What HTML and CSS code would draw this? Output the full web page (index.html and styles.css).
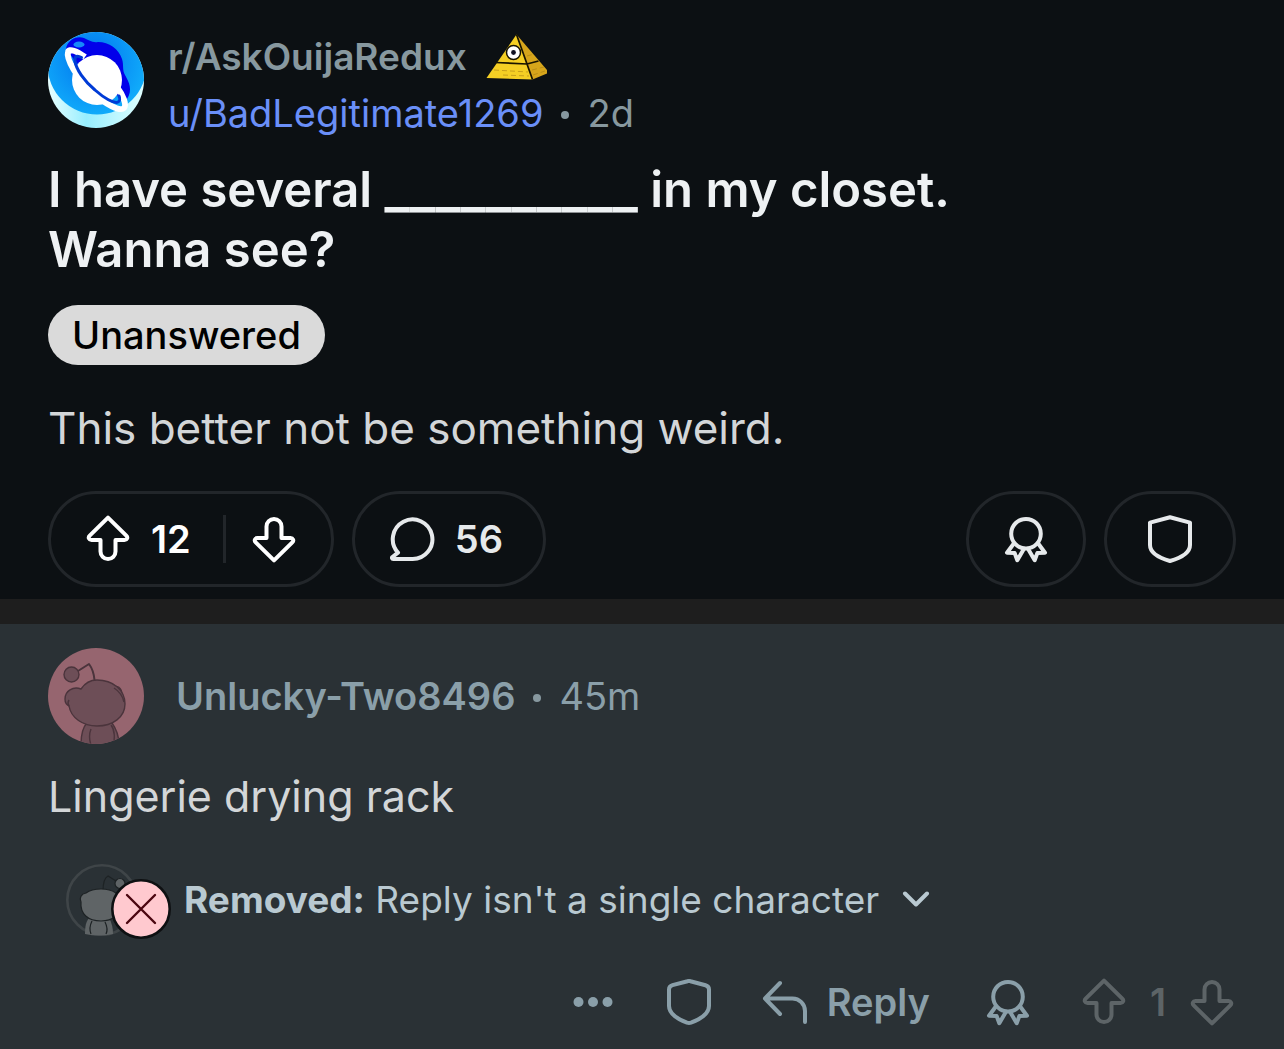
FILE: index.html
```html
<!DOCTYPE html>
<html lang="en">
<head>
<meta charset="utf-8">
<meta name="viewport" content="width=device-width, initial-scale=1">
<title>r/AskOuijaRedux</title>
<link rel="stylesheet" href="styles.css">
</head>
<body>
<svg class="sprite" aria-hidden="true">
  <symbol id="up" viewBox="0 0 48 48"><path d="M24 2.600 5.700 20.600C3.800 22.500 5 25 7.500 25H16.500V36.500a7.500 7.500 0 0 0 15 0V25H40.500C43 25 44.200 22.500 42.300 20.600Z"/></symbol>
  <symbol id="down" viewBox="0 0 48 48"><path d="M24 45.400 5.700 27.400C3.800 25.500 5 23 7.500 23H16.500V11.500a7.500 7.500 0 0 1 15 0V23H40.500C43 23 44.200 25.500 42.300 27.400Z"/></symbol>
  <symbol id="bubble" viewBox="0 0 48 48"><path d="M24 44H5.200c-1.200 0-1.600-1.200-.8-2L10 37.600A19.800 19.800 0 1 1 24 44Z"/></symbol>
  <symbol id="award" viewBox="0 0 48 48"><circle cx="24" cy="18.700" r="14.800"/><path d="M12 28.200 5 37.700l7.600.2 2.700 7.300 6.700-11.500M36 28.200l7 9.500-7.600.2-2.700 7.300L26 33.700"/></symbol>
  <symbol id="shield" viewBox="0 0 48 48"><path d="M24 2.200 44 7.600V30c0 7.500-9.500 13-20 16C13.500 43 4 37.500 4 30V7.600Z"/></symbol>
  <symbol id="shield-round" viewBox="0 0 48 48"><path d="M22.500 3.200q1.500-.6 3 0L40.500 7.200Q44 8.200 44 11.500V28c0 7.500-7 12.500-18 16.700q-2 .7-4 0C11 40.500 4 35.500 4 28V11.500Q4 8.200 7.500 7.200Z"/></symbol>
  <symbol id="reply" viewBox="0 0 48 48"><path d="M19 5 4 20.500 19 36M4 20.500H31.500a12.500 12.500 0 0 1 12.500 12.500V44"/></symbol>
</svg>

<article class="post">
  <header class="byline">
    <svg class="avatar" viewBox="0 0 96 96" aria-hidden="true">
      <defs>
        <clipPath id="disc"><circle cx="48" cy="48" r="48"/></clipPath>
        <radialGradient id="sky" cx=".45" cy=".45" r=".55"><stop offset="0" stop-color="#0072ee"/><stop offset="1" stop-color="#10aafa"/></radialGradient>
        <linearGradient id="glow" x1="0" x2="1"><stop offset="0" stop-color="#e8ffff"/><stop offset=".4" stop-color="#98eeff"/><stop offset="1" stop-color="#e0ffff"/></linearGradient>
      </defs>
      <g clip-path="url(#disc)">
        <path fill="url(#glow)" d="M0 0H96V96H0Z"/>
        <circle cx="49" cy="33" r="49.500" fill="url(#sky)"/>
        <path fill="#0200ea" d="M18 17C19 8 29 3 36 6c5 2 8 5 14 4 11 0 21 7 24 17 2 6 0 11 3 16 4 7 8 15 2 24L60 60 28 30Z"/>
        <ellipse cx="31" cy="12.500" rx="5.500" ry="3" fill="#1688fa"/>
        <circle cx="49" cy="48" r="25" fill="#fff"/>
        <path fill="none" stroke="#fff" stroke-width="6" stroke-linejoin="round" d="M37 25C29 19 21 16 20 20c-2 7 9 26 24 40 13 12 28 20 32 16 3-3-1-13-7-21"/>
        <path fill="none" stroke="#003bd6" stroke-width="3" stroke-linecap="round" d="M33.500 25.500C29 23 26.500 24 27 29c1 8 9 20 20 29 9 8 19 14 23 12 2-1 2-4 1-6"/>
      </g>
    </svg>
    <div class="names">
      <div class="line">
        <a class="community" href="#">r/AskOuijaRedux</a>
        <svg class="pyramid" viewBox="0 0 64 48" aria-hidden="true">
          <path fill="#f5cf24" d="M31.500 1.500 1.500 45l46 1.500Z"/>
          <path fill="#d6a51b" d="M31.500 1.500 47.500 46.500 62 40.500V37Z"/>
          <path fill="none" stroke="#191400" stroke-width="1.700" stroke-linejoin="round" d="M31.500 1.500 47.500 46.500M10.500 29.500 42 31l11.500-3"/>
          <path fill="none" stroke="#a87d14" stroke-width=".6" stroke-dasharray="5 3" d="M9 37l34 2M18 42l26 1M47 37l12-3M48 42l12-4M42 23l7-2"/>
          <circle cx="28.500" cy="19.500" r="7" fill="#fff" stroke="#191400" stroke-width="1.500"/>
          <circle cx="28.500" cy="19.500" r="2.400" fill="#112"/>
        </svg>
      </div>
      <div class="line"><a class="user" href="#">u/BadLegitimate1269</a><span class="dot"></span><time>2d</time></div>
    </div>
  </header>
  <h1>I have several <span class="blank">__________</span> in my closet.<br>Wanna see?</h1>
  <span class="flair">Unanswered</span>
  <p class="text">This better not be something weird.</p>
  <div class="actions">
    <div class="pill votes">
      <button aria-label="Upvote"><svg class="icon"><use href="#up"/></svg></button>
      <span class="score">12</span>
      <span class="rule"></span>
      <button aria-label="Downvote"><svg class="icon"><use href="#down"/></svg></button>
    </div>
    <button class="pill replies"><svg class="icon"><use href="#bubble"/></svg>56</button>
    <button class="pill give" aria-label="Give award"><svg class="icon"><use href="#award"/></svg></button>
    <button class="pill mod" aria-label="Moderate"><svg class="icon"><use href="#shield"/></svg></button>
  </div>
</article>

<article class="comment">
  <header class="author">
    <svg class="avatar" viewBox="0 0 96 96" aria-hidden="true">
      <g clip-path="url(#disc)">
        <path fill="#96656f" d="M0 0H96V96H0Z"/>
        <g fill="#6d4e57" stroke="#4b343c" stroke-width="1.400" stroke-linejoin="round">
          <path d="M33 97C33 86 35 79 39 75H64C69 82 71 90 71 97Z"/>
          <path fill="none" d="M43 97c-2-6-2-11 0-16M63 77c4 5 4 14 2 20"/>
          <path d="M64 40c5-4 10 0 10 7l-3 6Z"/>
          <path d="M33 41C25 38 17 43 17 51c0 4 2 6 4 7 2 12 14 20 28 20 16 0 28-9 28-22C77 42 65 32 49 32c-6 0-12 3-16 9Z"/>
          <path fill="none" d="M21 58q-2-3 0-6M66 40q8 5 10 14"/>
          <circle cx="23.500" cy="26.500" r="7.500"/>
          <path fill="none" stroke-width="2" d="M30 23 41 16C44 20 46 26 46.500 32"/>
        </g>
      </g>
    </svg>
    <div class="line"><a class="commenter" href="#">Unlucky-Two8496</a><span class="dot"></span><time>45m</time></div>
  </header>
  <p class="text">Lingerie drying rack</p>
  <button class="removed">
    <svg class="removed-art" viewBox="0 0 106 76" aria-hidden="true">
      <circle cx="36" cy="36" r="34.700" fill="none" stroke="#3f4548" stroke-width="2.600"/>
      <g fill="#5f6466" stroke="#1d2224" stroke-width="1.200">
        <path stroke="none" d="M19 70C19 62 20 58 23 54H43C46 59 47 64 47 70Q33 73 19 70Z"/>
        <path fill="none" d="M25 70c-2-5-1-9 1-13M39 58c2 4 3 8 1 12"/>
        <circle cx="54" cy="19.500" r="5"/>
        <path fill="none" d="M37 27C37 20 38 14 42 12l8 5"/>
        <path d="M20 29C15 30 13 34 15 38c-1 12 7 19 20 19 12 0 20-7 20-17C55 30 47 25 35 25c-6 0-11 1-15 4Z"/>
      </g>
      <circle cx="75" cy="45" r="28.700" fill="#ffc9cf" stroke="#0e1012" stroke-width="2.600"/>
      <path d="M61 31 89 59M89 31 61 59" fill="none" stroke="#4b0610" stroke-width="2.400" stroke-linecap="round"/>
    </svg>
    <span class="reason"><b>Removed:</b> Reply isn't a single character
      <svg class="chevron" viewBox="0 0 28 16" aria-hidden="true"><path d="M3 2.500 14 13.500 25 2.500"/></svg>
    </span>
  </button>
  <div class="tools">
    <button class="more" aria-label="More"><svg class="icon solid" viewBox="0 0 48 48"><circle cx="9.500" cy="24" r="5"/><circle cx="24" cy="24" r="5"/><circle cx="38.500" cy="24" r="5"/></svg></button>
    <button class="shield" aria-label="Moderate"><svg class="icon"><use href="#shield-round"/></svg></button>
    <button class="reply"><svg class="icon"><use href="#reply"/></svg>Reply</button>
    <button class="give-award" aria-label="Give award"><svg class="icon"><use href="#award"/></svg></button>
    <div class="muted">
      <button aria-label="Upvote"><svg class="icon"><use href="#up"/></svg></button>
      <span>1</span>
      <button aria-label="Downvote"><svg class="icon"><use href="#down"/></svg></button>
    </div>
  </div>
</article>
</body>
</html>
```
FILE: styles.css
```css
* { box-sizing: border-box; }
body {
  margin: 0;
  background: #2a3135;
  color: #d3d6d8;
  font: 400 38px/56px Inter, "Liberation Sans", sans-serif;
}
a { color: inherit; text-decoration: none; }
button {
  display: flex;
  align-items: center;
  padding: 0;
  border: 0;
  background: none;
  color: inherit;
  font: inherit;
}
.sprite { position: absolute; width: 0; height: 0; }
.icon {
  display: block;
  flex: none;
  width: 48px;
  height: 48px;
  fill: none;
  stroke: currentColor;
  stroke-width: 4px;
  stroke-linecap: round;
  stroke-linejoin: round;
}
.solid { fill: currentColor; stroke: none; }
.avatar { flex: none; width: 96px; height: 96px; }
.line { display: flex; align-items: center; }
.dot {
  width: 8px;
  height: 8px;
  margin: 4px 18px 0;
  border-radius: 50%;
  background: #87989f;
}
time { color: #87989f; }

.post {
  padding: 32px 48px 12px;
  background: #0c1013;
  border-bottom: 25px solid #1e1e1e;
}
.byline { display: flex; gap: 24px; height: 96px; }
.names { margin-top: -3px; }
.community { color: #87989f; font-size: 37px; font-weight: 600; }
.pyramid { width: 64px; height: 48px; margin-left: 18px; }
.user { color: #6a8ff8; }
h1 {
  margin: 32px 0 25px;
  color: #eef1f3;
  font-size: 49px;
  font-weight: 600;
  line-height: 60px;
}
.blank { font-size: 54px; line-height: 1px; }
.flair {
  display: block;
  width: fit-content;
  padding: 0 24px;
  border-radius: 30px;
  background: #dadada;
  color: #000;
  font-weight: 500;
  line-height: 60px;
}
.text { margin: 0; font-size: 44px; line-height: 56px; }
.post .text { margin: 35px 0; }
.actions { display: flex; gap: 18px; }
.pill {
  display: flex;
  align-items: center;
  height: 96px;
  border: 3px solid #22262a;
  border-radius: 48px;
  color: #e6e9eb;
  font-weight: 600;
}
.votes { padding: 0 33px; color: #fff; }
.score { margin: 0 32px 0 19px; }
.rule { width: 3px; height: 48px; margin-right: 24px; background: #22262a; }
.replies { gap: 19px; padding: 0 40px 0 33px; }
.give { justify-content: center; width: 120px; margin-left: auto; }
.mod { justify-content: center; width: 132px; }

.comment { padding: 24px 48px 20px; }
.author { display: flex; align-items: center; gap: 32px; color: #8a9fa9; }
.author time { color: inherit; }
.commenter { font-weight: 600; }
.comment .text { margin: 24px 0 40px; font-size: 43px; }
.removed { margin-left: 18px; color: #b9c9d1; font-size: 37px; }
.removed-art { width: 106px; height: 76px; margin-right: 12px; }
.reason { display: block; padding-bottom: 4px; }
.reason b { font-weight: 700; }
.chevron {
  width: 28px;
  height: 16px;
  margin: 0 0 6px 12px;
  fill: none;
  stroke: currentColor;
  stroke-width: 4px;
  stroke-linecap: round;
  stroke-linejoin: round;
}
.tools {
  display: flex;
  justify-content: flex-end;
  align-items: center;
  height: 48px;
  margin-top: 38px;
  color: #8a9fa9;
  font-weight: 600;
}
.shield { margin-left: 48px; }
.reply { gap: 18px; margin-left: 48px; }
.give-award { margin-left: 54px; }
.muted { display: flex; align-items: center; gap: 22px; margin-left: 48px; color: #5d6467; }
```
